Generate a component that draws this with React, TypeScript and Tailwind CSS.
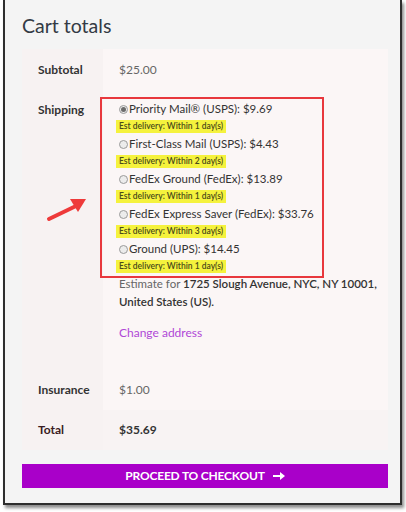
import React from 'react';

const options = [
  { label: 'Priority Mail® (USPS): $9.69', days: 1, checked: true },
  { label: 'First-Class Mail (USPS): $4.43', days: 2 },
  { label: 'FedEx Ground (FedEx): $13.89', days: 1 },
  { label: 'FedEx Express Saver (FedEx): $33.76', days: 3 },
  { label: 'Ground (UPS): $14.45', days: 1 },
];

function Radio({ checked }: { checked?: boolean }) {
  return (
    <span className="w-[9px] h-[9px] rounded-full border border-[#9a9a9a] bg-[#ececec] flex items-center justify-center mr-[1px]">
      {checked && <span className="w-[5px] h-[5px] rounded-full bg-[#6b6b6b]" />}
    </span>
  );
}

function App() {
  return (
    <div className="w-[406px] h-[512px] bg-white" style={{ fontFamily: 'Lato, "Open Sans", sans-serif' }}>
      <div className="ml-[3px] w-[399px] h-[505px] bg-[#f4f4f4] border-2 border-t-0 border-[#2e2e2e] shadow-[2px_3px_3px_rgba(0,0,0,0.45)] pl-[17px] pr-[12px] relative">
        <h2 className="pt-[14px] h-[49px] text-[19.5px] leading-[24px] text-[#333a44]">Cart totals</h2>

        <div className="w-[366px] flex flex-col text-[12px]">
          {/* Subtotal */}
          <div className="flex h-[41px]">
            <div className="w-[81px] bg-[#f7f2f2] flex items-center pl-[16px] font-bold text-[#333]">Subtotal</div>
            <div className="flex-1 bg-[#fbf6f6] flex items-center pl-[16px] text-[#666]">$25.00</div>
          </div>

          {/* Shipping */}
          <div className="flex h-[280px]">
            <div className="w-[81px] bg-[#f7f2f2] pl-[16px] pt-[11px] font-bold text-[#333] relative">
              Shipping
              <svg className="absolute left-[24px] top-[104px]" width="44" height="30" viewBox="0 0 44 30">
                <line x1="3" y1="25" x2="30" y2="12" stroke="#ee3a3a" strokeWidth="4" strokeLinecap="round" />
                <polygon points="40,5 24,5 32,18" fill="#ee3a3a" />
              </svg>
            </div>
            <div className="flex-1 bg-[#fbf6f6] pl-[16px] pt-[10px] relative">
              <div className="absolute left-[-3px] top-[7px] w-[224px] h-[181px] border-2 border-[#e8383d]" />
              {options.map((o) => (
                <div key={o.label} className="h-[35px]">
                  <div className="flex items-center h-[18px] text-[11.5px] text-[#333]">
                    <Radio checked={o.checked} />
                    {o.label}
                  </div>
                  <div className="h-[17px] flex items-center">
                    <span className="-ml-[3px] bg-[#f5f23d] px-[3px] h-[13px] leading-[13px] text-[8.5px] font-semibold text-[#4a4a1a]">
                      Est delivery: Within {o.days} day(s)
                    </span>
                  </div>
                </div>
              ))}
              <p className="leading-[18px] text-[11.5px] text-[#666] pr-[6px]">
                Estimate for <span className="font-semibold text-[#333]">1725 Slough Avenue, NYC, NY 10001, United States (US).</span>
              </p>
              <p className="mt-[13px] leading-[18px] text-[#b048d6]">Change address</p>
            </div>
          </div>

          {/* Insurance */}
          <div className="flex h-[40px]">
            <div className="w-[81px] bg-[#f7f2f2] flex items-center pl-[16px] font-bold text-[#333]">Insurance</div>
            <div className="flex-1 bg-[#fbf6f6] flex items-center pl-[16px] text-[#666]">$1.00</div>
          </div>

          {/* Total */}
          <div className="flex h-[40px]">
            <div className="w-[81px] bg-[#f7f2f2] flex items-center pl-[16px] font-bold text-[#3a1c22]">Total</div>
            <div className="flex-1 bg-[#f8f3f3] flex items-center pl-[16px] font-bold text-[#333]">$35.69</div>
          </div>
        </div>

        <button className="mt-[14px] w-[366px] h-[24px] bg-[#a900c9] text-white text-[12px] font-bold flex items-center justify-center gap-[8px] tracking-[-0.2px]">
          PROCEED TO CHECKOUT
          <svg width="12" height="8" viewBox="0 0 12 8">
            <rect x="0" y="3" width="8" height="2" fill="white" />
            <polygon points="7,0 12,4 7,8" fill="white" />
          </svg>
        </button>
      </div>
    </div>
  );
}

export default App;
